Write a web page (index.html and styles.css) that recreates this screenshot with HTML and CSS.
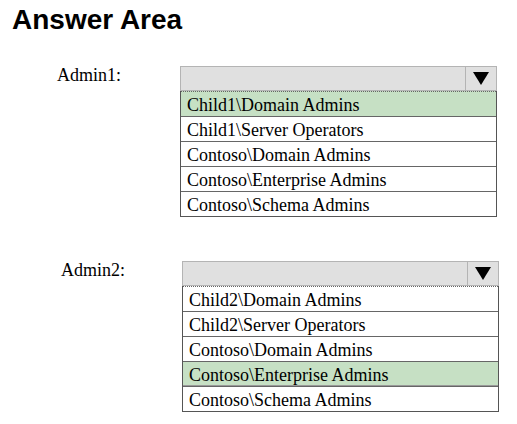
FILE: index.html
```html
<!DOCTYPE html>
<html lang="en">
<head>
    <meta charset="UTF-8">
    <meta name="viewport" content="width=device-width, initial-scale=1.0">
    <title>Answer Area</title>
    <link rel="stylesheet" href="styles.css">
</head>
<body>
    <h1 class="title">Answer Area</h1>

    <div class="question">
        <div class="label">Admin1:</div>
        <div class="dropdown">
            <div class="select">
                <div class="select-value"></div>
                <div class="select-arrow"><span class="triangle"></span></div>
            </div>
            <ul class="options">
                <li class="selected">Child1\Domain Admins</li>
                <li>Child1\Server Operators</li>
                <li>Contoso\Domain Admins</li>
                <li>Contoso\Enterprise Admins</li>
                <li>Contoso\Schema Admins</li>
            </ul>
        </div>
    </div>

    <div class="question second">
        <div class="label">Admin2:</div>
        <div class="dropdown">
            <div class="select">
                <div class="select-value"></div>
                <div class="select-arrow"><span class="triangle"></span></div>
            </div>
            <ul class="options">
                <li>Child2\Domain Admins</li>
                <li>Child2\Server Operators</li>
                <li>Contoso\Domain Admins</li>
                <li class="selected">Contoso\Enterprise Admins</li>
                <li>Contoso\Schema Admins</li>
            </ul>
        </div>
    </div>
</body>
</html>
```

FILE: styles.css
```css
body {
    margin: 0;
    background: #fff;
    color: #000;
    font-family: "Liberation Serif", "Times New Roman", serif;
}
.title {
    margin: 0;
    padding: 4px 0 0 12px;
    font-family: "Liberation Sans", Arial, sans-serif;
    font-size: 28px;
    font-weight: bold;
    line-height: 31px;
}
.question {
    display: flex;
    margin-top: 31px;
    padding-left: 57px;
}
.question.second {
    margin-top: 44px;
    padding-left: 61px;
}
.label {
    width: 123px;
    font-size: 18px;
    line-height: 25px;
    margin-top: -3px;
}
.question.second .label {
    width: 121px;
}
.dropdown {
    width: 317px;
}
.select {
    display: flex;
    height: 23px;
    background: #e0e0e0;
    border: 1px solid #b4b4b4;
}
.select-value {
    flex: 1;
}
.select-arrow {
    width: 30px;
    border-left: 1px solid #b4b4b4;
    display: flex;
    align-items: center;
    justify-content: center;
}
.triangle {
    width: 0;
    height: 0;
    border-left: 8px solid transparent;
    border-right: 8px solid transparent;
    border-top: 13px solid #000;
}
.options {
    list-style: none;
    margin: 0;
    padding: 0;
    border: 1px solid #555;
    border-top: none;
}
.options li {
    height: 23px;
    padding: 1px 0 0 6px;
    font-family: "Liberation Serif", "Times New Roman", serif;
    font-size: 18px;
    line-height: 24px;
    border-top: 1px solid #666;
}
.options li:first-child {
    border-top: 1px dotted #666;
}
.options li.selected {
    background: #c6e0c4;
}
.question.second .options li.selected {
    border-bottom: 1px solid #999;
    height: 22px;
}
```
